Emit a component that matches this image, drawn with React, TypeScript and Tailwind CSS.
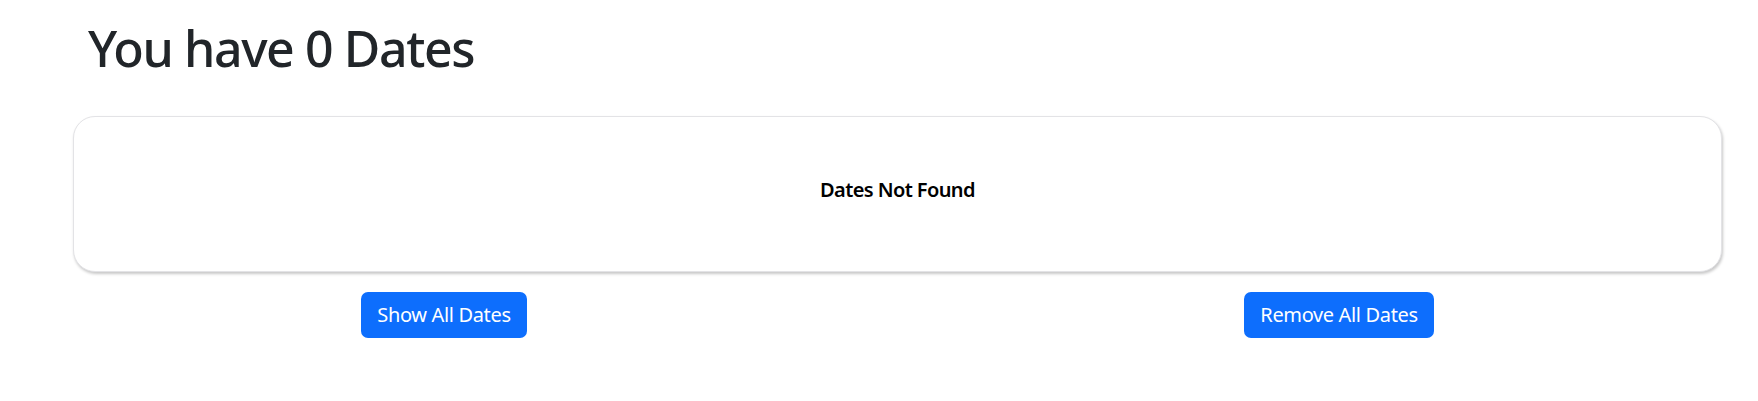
export default function App() {
  return (
    <div className="w-[1758px] h-[401px] bg-white overflow-hidden" style={{ fontFamily: '"Noto Sans", "Open Sans", sans-serif' }}>
      <h1 className="pt-[18px] pl-[88px] text-[50px] leading-[60px] font-medium tracking-[-1.4px] text-[#212529]">You have 0 Dates</h1>
      <div className="mt-[38px] ml-[73px] w-[1649px] h-[156px] rounded-[22px] border border-[#e3e3e6] bg-white shadow-[1px_2px_3px_rgba(0,0,0,0.22)] flex items-center justify-center pb-[9px]">
        <span className="text-[20px] leading-[28px] font-semibold tracking-[-0.6px] text-black">Dates Not Found</span>
      </div>
      <div className="mt-[20px] flex">
        <div className="w-[888px] shrink-0 flex justify-center">
          <button className="h-[46px] px-[16px] rounded-[7px] bg-[#0d6efd] text-white text-[20px] leading-[30px] tracking-[-0.35px]">Show All Dates</button>
        </div>
        <div className="flex-1 pl-[32px] flex justify-center">
          <button className="h-[46px] px-[16px] rounded-[7px] bg-[#0d6efd] text-white text-[20px] leading-[30px] tracking-[-0.35px]">Remove All Dates</button>
        </div>
      </div>
    </div>
  );
}
